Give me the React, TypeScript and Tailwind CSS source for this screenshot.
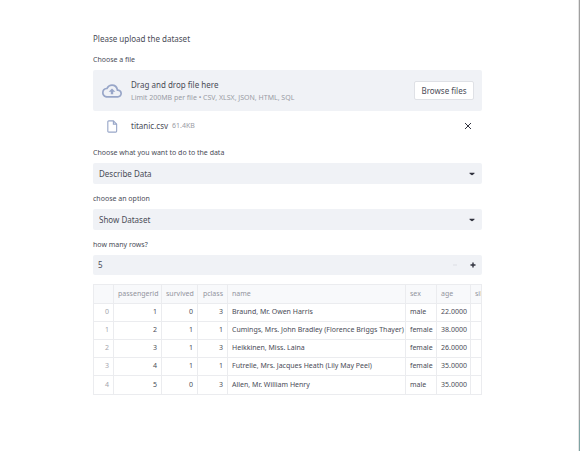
import { useState } from "react";

const columns = [
  { name: "", width: "w-[20px]", align: "text-right" },
  { name: "passengerid", width: "w-[48px]", align: "text-right" },
  { name: "survived", width: "w-[36px]", align: "text-right" },
  { name: "pclass", width: "w-[30px]", align: "text-right" },
  { name: "name", width: "w-[178px]", align: "text-left" },
  { name: "sex", width: "w-[31px]", align: "text-left" },
  { name: "age", width: "w-[34px]", align: "text-left" },
  { name: "sibsp", width: "w-[34px]", align: "text-left" },
];

const passengers = [
  ["0", "1", "0", "3", "Braund, Mr. Owen Harris", "male", "22.0000", ""],
  ["1", "2", "1", "1", "Cumings, Mrs. John Bradley (Florence Briggs Thayer)", "female", "38.0000", ""],
  ["2", "3", "1", "3", "Heikkinen, Miss. Laina", "female", "26.0000", ""],
  ["3", "4", "1", "1", "Futrelle, Mrs. Jacques Heath (Lily May Peel)", "female", "35.0000", ""],
  ["4", "5", "0", "3", "Allen, Mr. William Henry", "male", "35.0000", ""],
];

function SelectField({ id, label, options }: { id: string; label: string; options: string[] }) {
  return (
    <div className="flex flex-col gap-1">
      <label htmlFor={id} className="text-[7px] leading-3">
        {label}
      </label>
      <div className="relative">
        <select
          id={id}
          className="block h-[21px] w-full appearance-none rounded-xs bg-[#f0f2f6] px-1.5 text-[8px] leading-3 outline-none"
        >
          {options.map((option) => (
            <option key={option}>{option}</option>
          ))}
        </select>
        <svg
          viewBox="0 0 6 3"
          className="pointer-events-none absolute top-1/2 right-[7px] h-[3px] w-[6px] -translate-y-1/2"
          fill="#31333f"
        >
          <path d="M0.500 0h5v1L3 3 0.500 1z" />
        </svg>
      </div>
    </div>
  );
}

function Uploader() {
  return (
    <section className="flex flex-col">
      <label htmlFor="file" className="mb-1 text-[7px] leading-3">
        Choose a file
      </label>
      <div className="flex h-[41px] items-center rounded-xs bg-[#f0f2f6] pr-2 pl-[9px]">
        <svg viewBox="0 0 24 24" className="mr-[9px] h-5 w-5 shrink-0" fill="#98a6c8">
          <path d="M19.35 10.04A7.49 7.49 0 0 0 12 4C9.11 4 6.6 5.64 5.35 8.04A5.994 5.994 0 0 0 0 14c0 3.31 2.69 6 6 6h13c2.76 0 5-2.24 5-5 0-2.64-2.05-4.78-4.65-4.96zM19 18H6c-2.21 0-4-1.79-4-4 0-2.05 1.53-3.76 3.56-3.97l1.07-.11.5-.95A5.469 5.469 0 0 1 12 6c2.62 0 4.88 1.86 5.39 4.43l.3 1.5 1.53.11A2.98 2.98 0 0 1 22 15c0 1.65-1.35 3-3 3zM8 13h2.55v3h2.9v-3H16l-4-4z" />
        </svg>
        <div className="flex min-w-0 flex-1 flex-col whitespace-nowrap">
          <span className="text-[8px] leading-[13px]">Drag and drop file here</span>
          <span className="text-[7px] leading-[13px] text-[#9a9ca5]">
            Limit 200MB per file • CSV, XLSX, JSON, HTML, SQL
          </span>
        </div>
        <input id="file" type="file" className="hidden" />
        <button
          type="button"
          onClick={() => document.getElementById("file")?.click()}
          className="h-[19px] w-[60px] shrink-0 rounded-xs border border-[#dfe1e6] bg-white text-[8px] leading-3 whitespace-nowrap"
        >
          Browse files
        </button>
      </div>
      <div className="flex h-[30px] items-center pr-[10px] pl-[13px]">
        <svg viewBox="0 0 12 14" className="mr-[13px] h-[13px] w-3 shrink-0" fill="none" stroke="#98a6c8">
          <path d="M2.5 1h5L11 4.5V12a1 1 0 0 1-1 1H2.500a1 1 0 0 1-1-1V2a1 1 0 0 1 1-1z" strokeWidth="1.2" />
          <path d="M7.500 1v3.500H11" strokeWidth="1.2" />
        </svg>
        <span className="text-[8px] leading-3">titanic.csv</span>
        <span className="ml-1 text-[7px] leading-3 text-[#9a9ca5]">61.4KB</span>
        <button type="button" aria-label="Remove titanic.csv" className="ml-auto">
          <svg viewBox="0 0 8 8" className="h-2 w-2" stroke="#31333f" strokeWidth="1">
            <path d="M1 1l6 6M7 1L1 7" />
          </svg>
        </button>
      </div>
    </section>
  );
}

function RowCount() {
  const [rows, setRows] = useState(5);
  return (
    <div className="flex flex-col gap-1">
      <label htmlFor="rows" className="text-[7px] leading-3">
        how many rows?
      </label>
      <div className="flex h-5 items-center rounded-xs bg-[#f0f2f6] pr-[6px] pl-[5px]">
        <input
          id="rows"
          type="number"
          value={rows}
          onChange={(event) => setRows(Number(event.target.value))}
          className="min-w-0 flex-1 [appearance:textfield] bg-transparent text-[8px] leading-3 outline-none [&::-webkit-inner-spin-button]:appearance-none"
        />
        <button type="button" aria-label="Fewer rows" disabled className="mr-3">
          <svg viewBox="0 0 6 6" className="h-1.5 w-1.5" stroke="#dcdee4">
            <path d="M1 3h4" />
          </svg>
        </button>
        <button type="button" aria-label="More rows" onClick={() => setRows(rows + 1)}>
          <svg viewBox="0 0 6 6" className="h-1.5 w-1.5" stroke="#31333f" strokeWidth="1.4">
            <path d="M0.500 3h5M3 0.500v5" />
          </svg>
        </button>
      </div>
    </div>
  );
}

function DataTable() {
  return (
    <div className="overflow-hidden border border-[#ebecef]">
      <table className="w-[411px] table-fixed border-separate border-spacing-0 text-[7px] leading-3">
        <thead>
          <tr className="h-[19px] bg-[#f8f9fb] text-[#92949d]">
            {columns.map((column) => (
              <th
                key={column.name}
                className={`${column.width} ${column.align} overflow-hidden border-r border-b border-[#ebecef] px-1 font-normal whitespace-nowrap`}
              >
                {column.name}
              </th>
            ))}
          </tr>
        </thead>
        <tbody>
          {passengers.map((row, rowIndex) => (
            <tr key={row[0]} className="h-[18px]">
              {row.map((value, index) => (
                <td
                  key={columns[index].name}
                  className={`${columns[index].align} ${index === 0 ? "text-[#a3a5ad]" : ""} ${
                    rowIndex < passengers.length - 1 ? "border-b" : ""
                  } border-r border-[#ebecef] px-1 pb-px whitespace-nowrap`}
                >
                  {value}
                </td>
              ))}
            </tr>
          ))}
        </tbody>
      </table>
    </div>
  );
}

export default function App() {
  return (
    <div className="flex min-h-screen bg-white font-['Noto_Sans',sans-serif] text-[#4a4c57]">
      <main className="flex min-w-0 flex-1 flex-col pt-8 pr-24 pl-[93px]">
        <p className="mb-2 text-[8px] leading-[14px]">Please upload the dataset</p>
        <Uploader />
        <div className="mt-1.5 flex flex-col gap-[9px]">
          <SelectField id="action" label="Choose what you want to do to the data" options={["Describe Data"]} />
          <SelectField id="option" label="choose an option" options={["Show Dataset"]} />
          <RowCount />
          <DataTable />
        </div>
      </main>
      <div className="flex w-0.5 flex-col border-l border-[#e4e4e4]">
        <div className="flex-1 bg-[#a0a0a0]" />
        <div className="h-[31px] bg-[#7fa3a3]" />
      </div>
    </div>
  );
}
